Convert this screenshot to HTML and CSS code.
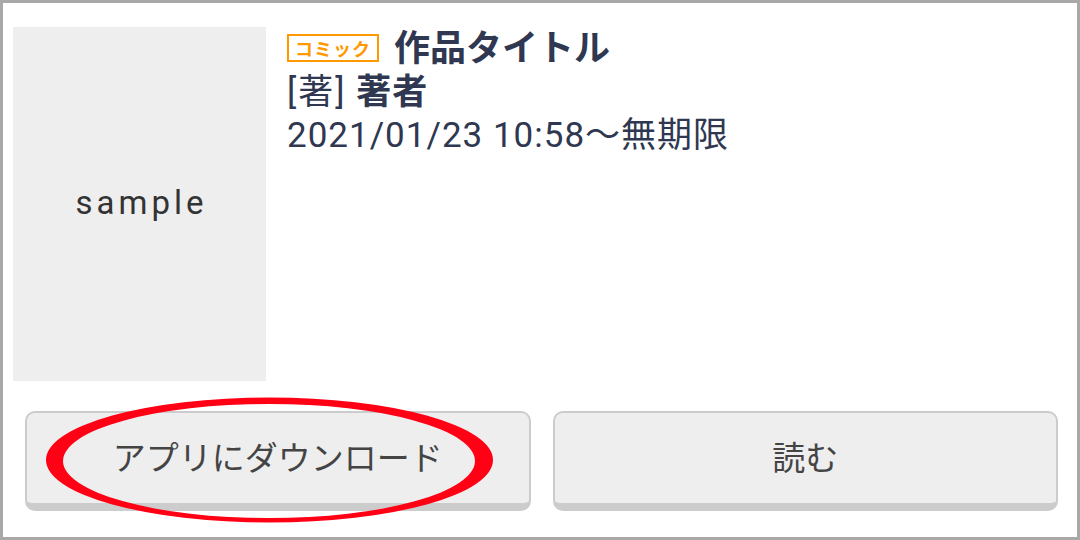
FILE: index.html
```html
<!DOCTYPE html>
<html lang="ja">
<head>
    <meta charset="UTF-8">
    <meta name="viewport" content="width=device-width, initial-scale=1.0">
    <title>作品タイトル</title>
    <link rel="stylesheet" href="styles.css">
</head>
<body>

<div class="item">
    <div class="item-main">
        <div class="thumb">sample</div>
        <div class="info">
            <div class="title-row">
                <span class="badge">コミック</span>
                <h1 class="title">作品タイトル</h1>
            </div>
            <p class="author"><span class="role">[著]</span> <b>著者</b></p>
            <p class="period">2021/01/23 10:58～無期限</p>
        </div>
    </div>

    <div class="actions">
        <button class="btn">アプリにダウンロード</button>
        <button class="btn">読む</button>
    </div>
</div>

<!-- 強調の赤丸 -->
<svg class="mark" viewBox="0 0 1080 540" width="1080" height="540">
    <path fill="#ff0014" fill-rule="evenodd"
          d="M46 460 A223.5 62.5 0 1 0 493 460 A223.5 62.5 0 1 0 46 460 Z
             M63 461 A206 57 0 1 0 475 461 A206 57 0 1 0 63 461 Z"/>
</svg>

</body>
</html>
```

FILE: styles.css
```css
* {
    box-sizing: border-box;
}

html, body {
    margin: 0;
    height: 100%;
}

body {
    font-family: Roboto, "Noto Sans CJK JP", sans-serif;
    color: #2f3850;
    background: #fff;
    border: 3px solid #a8a8a8;
    width: 1080px;
    height: 540px;
    overflow: hidden;
}

.item {
    padding: 24px 0 0 10px;
}

.item-main {
    display: flex;
    gap: 21px;
}

.thumb {
    width: 253px;
    height: 354px;
    background: #eeeeee;
    color: #333;
    display: flex;
    align-items: center;
    justify-content: center;
    font-size: 33px;
    letter-spacing: 4px;
    padding: 0 0 4px 4px;
}

.info {
    flex: 1;
}

.title-row {
    display: flex;
    align-items: center;
    gap: 15px;
    height: 44px;
}

.badge {
    display: inline-flex;
    align-items: center;
    justify-content: center;
    width: 92px;
    height: 28px;
    border: 2px solid #ff9900;
    color: #ff9900;
    font-family: "Noto Sans CJK JP", sans-serif;
    font-size: 18px;
    font-weight: bold;
    letter-spacing: 1px;
    margin-top: -2px;
}

.title {
    margin: 0;
    font-size: 36px;
    font-weight: bold;
    line-height: 44px;
}

.author, .period {
    margin: 0;
    font-size: 35px;
    line-height: 43px;
    letter-spacing: 1px;
}

.author .role {
    letter-spacing: 2px;
}

.author b {
    font-weight: bold;
}

.actions {
    display: flex;
    gap: 22px;
    margin: 30px 19px 0 12px;
}

.btn {
    flex: 1;
    height: 100px;
    background: #eeeeee;
    border: 2.5px solid #cccccc;
    border-bottom-width: 8px;
    border-radius: 10px;
    font-family: "Noto Sans CJK JP", sans-serif;
    font-size: 33px;
    color: #444;
    padding: 0 0 4px;
    cursor: pointer;
}

.mark {
    position: fixed;
    top: 0;
    left: 0;
    pointer-events: none;
}
```
